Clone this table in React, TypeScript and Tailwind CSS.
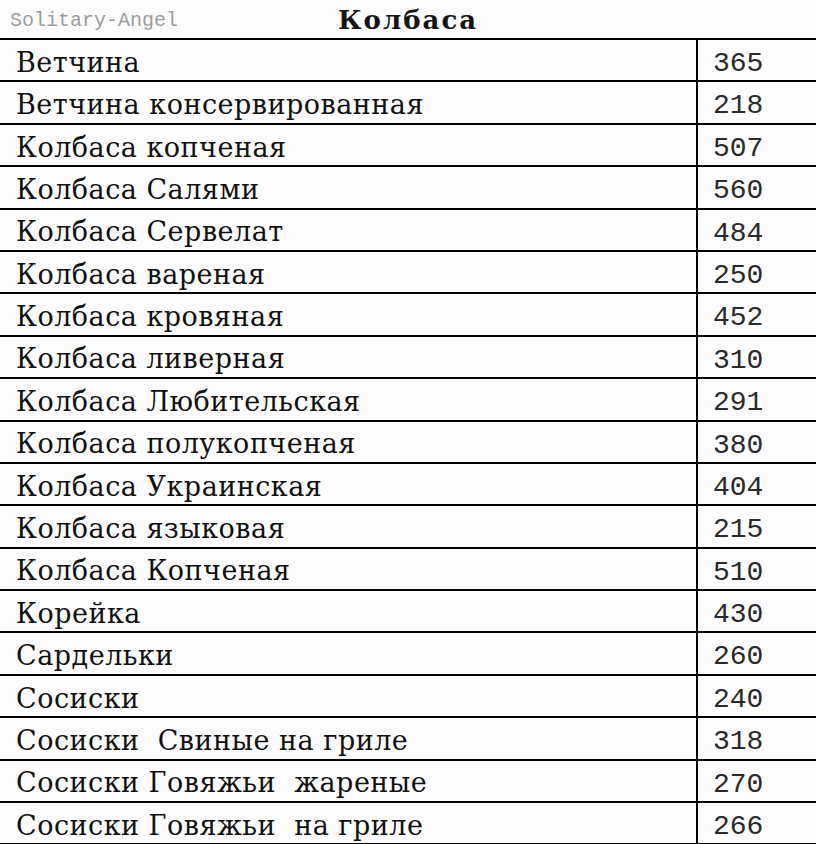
const rows: [string, string][] = [
  ["Ветчина", "365"],
  ["Ветчина консервированная", "218"],
  ["Колбаса копченая", "507"],
  ["Колбаса Салями", "560"],
  ["Колбаса Сервелат", "484"],
  ["Колбаса вареная", "250"],
  ["Колбаса кровяная", "452"],
  ["Колбаса ливерная", "310"],
  ["Колбаса Любительская", "291"],
  ["Колбаса полукопченая", "380"],
  ["Колбаса Украинская", "404"],
  ["Колбаса языковая", "215"],
  ["Колбаса Копченая", "510"],
  ["Корейка", "430"],
  ["Сардельки", "260"],
  ["Сосиски", "240"],
  ["Сосиски  Свиные на гриле", "318"],
  ["Сосиски Говяжьи  жареные", "270"],
  ["Сосиски Говяжьи  на гриле", "266"],
];

export default function App() {
  return (
    <div className="h-[844px] w-[816px] overflow-hidden bg-[#fcfcfc] text-black">
      <div className="relative flex h-[38px] items-center justify-center">
        <span className="absolute left-[10px] top-[6px] font-['Liberation_Mono',monospace] text-[20px] text-[#9c9c9c]">
          Solitary-Angel
        </span>
        <h1 className="pt-[3px] font-['DejaVu_Serif',serif] text-[26px] font-bold tracking-[2px] text-[#151515]">
          Колбаса
        </h1>
      </div>
      <div className="border-t-2 border-black">
        {rows.map(([name, kcal]) => (
          <div key={name} className="grid h-[42.4px] grid-cols-[696px_1fr] border-b-2 border-black">
            <div className="flex items-center whitespace-pre pl-[16px] pt-[1px] font-['DejaVu_Serif',serif] text-[27px] tracking-[0.5px] text-[#111]">
              {name}
            </div>
            <div className="flex items-center border-l-2 border-black pl-[15px] pt-[3px] font-['Liberation_Mono',monospace] text-[28px] text-[#2a2a2a]">
              {kcal}
            </div>
          </div>
        ))}
      </div>
    </div>
  );
}
